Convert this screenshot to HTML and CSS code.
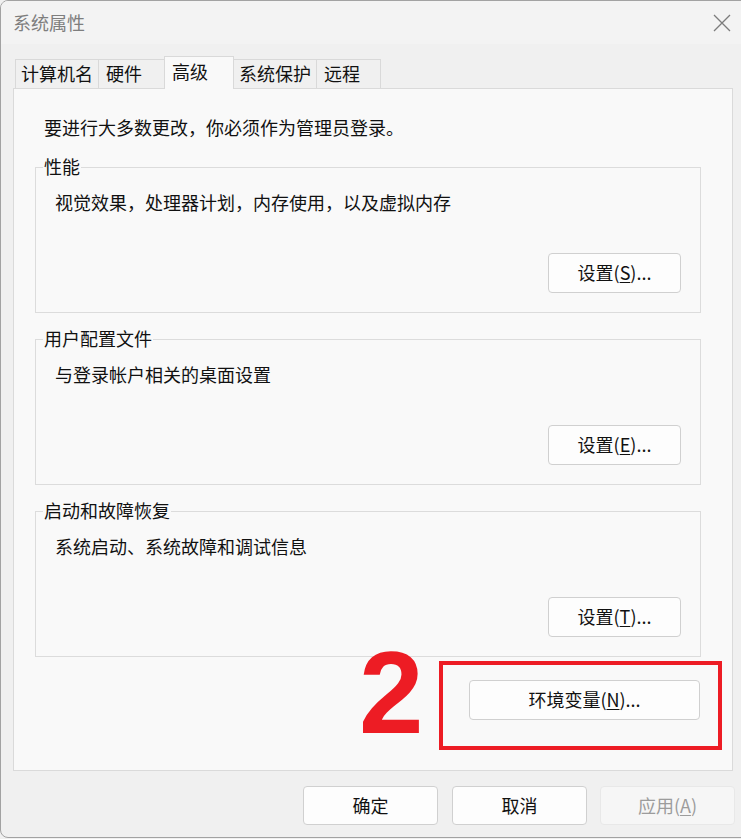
FILE: index.html
```html
<!DOCTYPE html>
<html lang="zh-CN">
<head>
<meta charset="utf-8">
<title>系统属性</title>
<link rel="stylesheet" href="styles.css">
</head>
<body>
<div class="window">
  <div class="titlebar">
    <span class="title">系统属性</span>
    <svg class="close" width="18" height="18" viewBox="0 0 18 18"><path d="M1 1 L17 17 M17 1 L1 17" stroke="#7c7c7c" stroke-width="1.3" fill="none"/></svg>
  </div>
  <div class="body">
    <div class="tabs">
      <div class="tab">计算机名</div>
      <div class="tab">硬件</div>
      <div class="tab active">高级</div>
      <div class="tab">系统保护</div>
      <div class="tab">远程</div>
    </div>
    <div class="panel">
      <p class="intro">要进行大多数更改，你必须作为管理员登录。</p>
      <fieldset class="group">
        <legend>性能</legend>
        <p class="desc">视觉效果，处理器计划，内存使用，以及虚拟内存</p>
        <div class="row"><button class="btn">设置(<u>S</u>)...</button></div>
      </fieldset>
      <fieldset class="group">
        <legend>用户配置文件</legend>
        <p class="desc">与登录帐户相关的桌面设置</p>
        <div class="row"><button class="btn">设置(<u>E</u>)...</button></div>
      </fieldset>
      <fieldset class="group">
        <legend>启动和故障恢复</legend>
        <p class="desc">系统启动、系统故障和调试信息</p>
        <div class="row"><button class="btn">设置(<u>T</u>)...</button></div>
      </fieldset>
      <div class="envrow"><button class="btn env">环境变量(<u>N</u>)...</button></div>
    </div>
    <div class="footer">
      <button class="btn foot">确定</button>
      <button class="btn foot">取消</button>
      <button class="btn foot disabled">应用(<u>A</u>)</button>
    </div>
  </div>
  <div class="mark-box"></div>
  <div class="mark-num">2</div>
</div>
</body>
</html>
```

FILE: styles.css
```css
html, body {
  margin: 0;
  padding: 0;
  background: #f0f0f0;
  overflow: hidden;
  width: 741px;
  height: 839px;
}
* { box-sizing: border-box; }

.window {
  position: relative;
  width: 770px;
  height: 838px;
  border: 1px solid #a2a2a2;
  border-radius: 8px;
  background: #f0f0f0;
  font-family: "Noto Sans CJK SC", "Noto Sans", sans-serif;
  font-size: 18px;
  color: #111;
  overflow: hidden;
}

.titlebar {
  height: 43px;
  background: #f3f3f3;
  display: flex;
  align-items: center;
  padding-left: 12px;
  position: relative;
}
.title {
  color: #7e7e7e;
  line-height: 24px;
  margin-top: -2px;
}
.close {
  position: absolute;
  left: 712px;
  top: 13px;
}

.body {
  padding: 13px 0 0 12px;
  width: 734px;
}

.tabs {
  display: flex;
  align-items: flex-end;
  height: 31px;
  position: relative;
  z-index: 1;
  padding-left: 2px;
}
.tab {
  height: 29px;
  min-width: 65px;
  padding: 0 5px 0 5px;
  line-height: 27px;
  border: 1px solid #d9d9d9;
  border-bottom: none;
  margin-right: -1px;
  background: #f0f0f0;
  white-space: nowrap;
}
.tab:nth-child(2) { min-width: 67px; padding-left: 7px; }
.tab.active {
  height: 33px;
  min-width: 70px;
  padding: 0 7px;
  line-height: 29px;
  background: #f9f9f9;
  margin-bottom: -1px;
  position: relative;
  z-index: 2;
}
.tab:last-child { padding-left: 7px; }

.panel {
  width: 720px;
  height: 683px;
  background: #f9f9f9;
  border: 1px solid #dadada;
  padding: 26px 31px 0 21px;
}
.intro {
  margin: 0 0 16px 9px;
  line-height: 24px;
}

.group {
  margin: 0 0 14px 0;
  border: 1px solid #dcdcdc;
  padding: 0 19px 19px 19px;
  min-width: 0;
}
.group legend {
  margin-left: -12px;
  padding: 0 1px;
  line-height: 24px;
  position: relative;
  top: -1px;
}
.desc {
  margin: 11px 0 39px 0;
  line-height: 24px;
}
.row {
  display: flex;
  justify-content: flex-end;
}

.btn {
  font-family: "Noto Sans CJK SC", "Noto Sans", sans-serif;
  font-size: 18px;
  color: #111;
  background: #fdfdfd;
  border: 1px solid #d0d0d0;
  border-radius: 4px;
  width: 133px;
  height: 40px;
  padding: 0 0 2px 0;
  line-height: 24px;
}
.btn u { text-underline-offset: 2px; text-decoration-thickness: 1px; }

.envrow {
  display: flex;
  justify-content: flex-end;
  margin-top: 23px;
  padding-right: 1px;
}
.btn.env { width: 231px; }

.footer {
  display: flex;
  justify-content: flex-end;
  gap: 14px;
  margin-top: 15px;
}
.btn.foot { width: 135px; height: 39px; }
.btn.foot.disabled {
  margin-left: -1px;
  background: #f6f6f6;
  border-color: #e8e8e8;
  color: #9c9c9c;
}

.mark-box {
  position: absolute;
  left: 438px;
  top: 660px;
  width: 283px;
  height: 89px;
  border: 4px solid #ed1c24;
}
.mark-num {
  position: absolute;
  left: 358px;
  top: 634px;
  font-family: "Liberation Sans", Arial, sans-serif;
  font-weight: bold;
  font-size: 116px;
  line-height: 1;
  color: #ed1c24;
}
```
